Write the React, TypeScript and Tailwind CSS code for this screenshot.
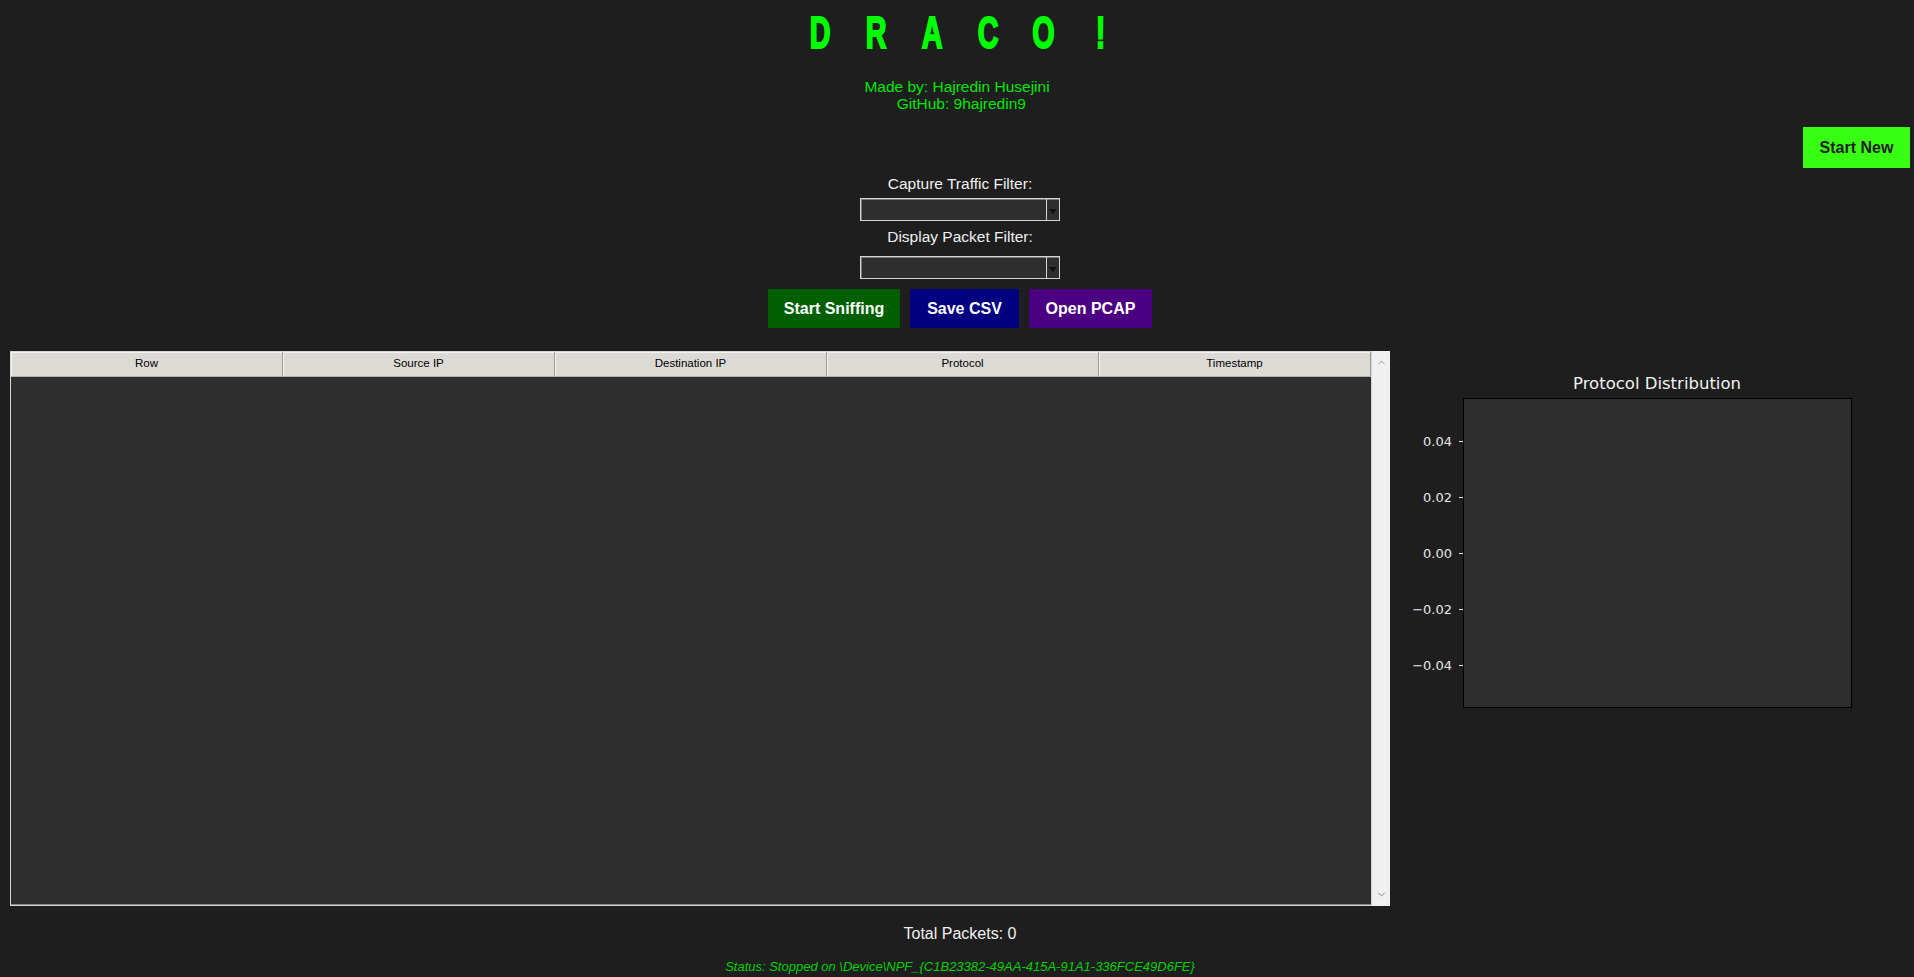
import { ChevronDown, ChevronUp } from "lucide-react";

const columns = ["Row", "Source IP", "Destination IP", "Protocol", "Timestamp"];
const ticks = [
  { label: "0.04", y: 90 },
  { label: "0.02", y: 146 },
  { label: "0.00", y: 202 },
  { label: "\u22120.02", y: 258 },
  { label: "\u22120.04", y: 314 },
];

function Combo() {
  return (
    <div className="w-[200px] h-[23px] flex border border-[#d6d4cf] bg-[#2e2e2e] shadow-[inset_1px_1px_0_#7a7a7a]">
      <div className="flex-1" />
      <div className="w-[13px] border-l border-[#d6d4cf] flex items-end justify-center pb-[6px]">
        <div className="w-0 h-0 border-l-[4px] border-r-[4px] border-t-[5px] border-l-transparent border-r-transparent border-t-[#111]" />
      </div>
    </div>
  );
}

export default function App() {
  return (
    <div className="w-full min-h-[977px] bg-[#1e1e1e] flex flex-col pt-[7px] font-['Liberation_Sans',Arial,sans-serif]">
      {/* titulo */}
      <div className="pl-[6px] flex justify-center text-[45px] leading-[52px] font-bold text-[#00ff00]">
        {["D", "R", "A", "C", "O", "!"].map((l, i) => (
          <span key={i} className="inline-block w-[56px] text-center">
            <span className="inline-block scale-x-[0.64] [-webkit-text-stroke:2px_#00ff00]">{l}</span>
          </span>
        ))}
      </div>
      <div className="mt-[19px] flex flex-col items-center text-[15.5px] leading-[17px] text-[#00e600]">
        <span>Made by: Hajredin Husejini</span>
        <span className="whitespace-pre">{"  GitHub: 9hajredin9"}</span>
      </div>

      <div className="mt-[15px] flex justify-end pr-[4px]">
        <button className="w-[107px] h-[41px] bg-[#39ff14] text-[#1e1e1e] text-[16px] font-bold">
          Start New
        </button>
      </div>

      {/* filtros */}
      <div className="mt-[7px] pl-[6px] flex flex-col items-center">
        <span className="text-[15.5px] leading-[18px] text-[#f0f0f0]">Capture Traffic Filter:</span>
        <div className="mt-[5px]">
          <Combo />
        </div>
        <span className="mt-[7px] text-[15.5px] leading-[18px] text-[#f0f0f0]">Display Packet Filter:</span>
        <div className="mt-[10px]">
          <Combo />
        </div>
        <div className="mt-[10px] flex gap-[10px] text-[16px] font-bold text-white">
          <button className="w-[132px] h-[39px] bg-[#005f00]">Start Sniffing</button>
          <button className="w-[109px] h-[39px] bg-[#000080]">Save CSV</button>
          <button className="w-[123px] h-[39px] bg-[#4b0082]">Open PCAP</button>
        </div>
      </div>

      {/* tabla + grafico */}
      <div className="mt-[23px] flex">
        <div className="ml-[10px] w-[1381px] h-[555px] flex">
          <div className="flex-1 flex flex-col border border-[#d6d4cf] bg-[#2e2e2e] shadow-[inset_0_-1px_0_#8a8a8a]">
            <div className="grid grid-cols-5 h-[25px] bg-[#dcdad5] border-b border-[#b5b2ab]">
              {columns.map((c) => (
                <div
                  key={c}
                  className="flex items-center justify-center border-r border-[#9f9c95] shadow-[inset_1px_1px_0_#f4f3f1] text-[11.5px] text-black"
                >
                  {c}
                </div>
              ))}
            </div>
            <div className="flex-1" />
          </div>
          <div className="w-[18px] bg-[#f0f0f0] flex flex-col items-center justify-between py-[6px]">
            <ChevronUp size={11} strokeWidth={2.5} className="text-[#b8b8b8]" />
            <ChevronDown size={11} strokeWidth={2.5} className="text-[#a8a8a8]" />
          </div>
        </div>

        <div className="flex-1">
          <svg width="524" height="380" className="block">
            <text
              x="267"
              y="38"
              textAnchor="middle"
              fill="#f2f2f2"
              fontSize="16.5"
              fontFamily="DejaVu Sans, sans-serif"
            >
              Protocol Distribution
            </text>
            <rect x="73.5" y="47.5" width="388" height="309" fill="#2e2e2e" stroke="#000" strokeWidth="1" />
            {ticks.map((t) => (
              <g key={t.label}>
                <line x1="69" y1={t.y + 0.5} x2="73" y2={t.y + 0.5} stroke="#e6e6e6" strokeWidth="1" />
                <text
                  x="62"
                  y={t.y + 5}
                  textAnchor="end"
                  fill="#e6e6e6"
                  fontSize="13"
                  fontFamily="DejaVu Sans, sans-serif"
                >
                  {t.label}
                </text>
              </g>
            ))}
          </svg>
        </div>
      </div>

      {/* pie */}
      <div className="mt-[19px] pl-[6px] flex flex-col items-center">
        <span className="text-[16px] leading-[18px] text-[#f0f0f0] whitespace-nowrap">Total Packets: 0</span>
        <span className="mt-[16px] text-[13px] leading-[15px] italic text-[#00d200] whitespace-nowrap">
          {"Status: Stopped on \\Device\\NPF_{C1B23382-49AA-415A-91A1-336FCE49D6FE}"}
        </span>
      </div>
    </div>
  );
}
